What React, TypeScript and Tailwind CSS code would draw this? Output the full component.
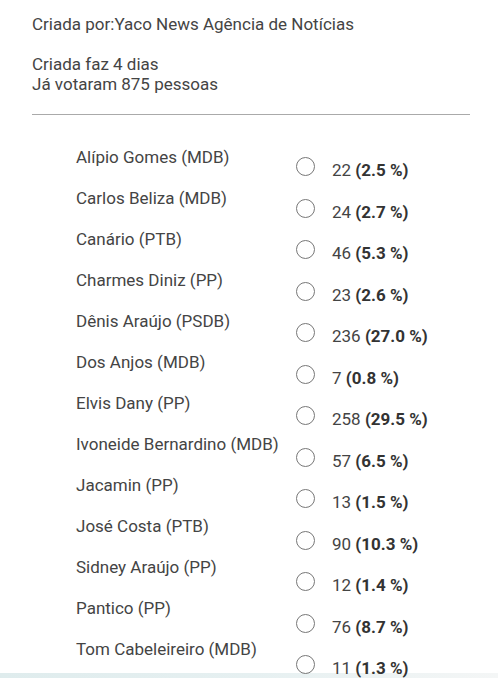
const rows: { name: string; votes: number; pct: string }[] = [
  { name: 'Alípio Gomes (MDB)', votes: 22, pct: '2.5' },
  { name: 'Carlos Beliza (MDB)', votes: 24, pct: '2.7' },
  { name: 'Canário (PTB)', votes: 46, pct: '5.3' },
  { name: 'Charmes Diniz (PP)', votes: 23, pct: '2.6' },
  { name: 'Dênis Araújo (PSDB)', votes: 236, pct: '27.0' },
  { name: 'Dos Anjos (MDB)', votes: 7, pct: '0.8' },
  { name: 'Elvis Dany (PP)', votes: 258, pct: '29.5' },
  { name: 'Ivoneide Bernardino (MDB)', votes: 57, pct: '6.5' },
  { name: 'Jacamin (PP)', votes: 13, pct: '1.5' },
  { name: 'José Costa (PTB)', votes: 90, pct: '10.3' },
  { name: 'Sidney Araújo (PP)', votes: 12, pct: '1.4' },
  { name: 'Pantico (PP)', votes: 76, pct: '8.7' },
  { name: 'Tom Cabeleireiro (MDB)', votes: 11, pct: '1.3' },
];

export default function App() {
  return (
    <div className="relative h-[678px] overflow-hidden bg-white font-['Roboto',sans-serif] text-[17px] leading-[20px] text-[#444]">
      <div className="absolute inset-x-0 bottom-0 h-[5px] bg-gradient-to-r from-[#dfeced] via-[#e6f0f1] to-[#f4f6f6]" />

      <div className="relative pl-8 pr-[28px] pt-[14px]">
        <p>Criada por:Yaco News Agência de Notícias</p>
        <p className="mt-5">Criada faz 4 dias</p>
        <p>Já votaram 875 pessoas</p>
        <div className="mt-5 border-t border-[#aaa]" />
      </div>

      {/* names and results sit in two columns; the results drift a little lower row by row */}
      <div className="relative mt-[32px] flex pl-[76px]">
        <ul className="w-[220px] shrink-0">
          {rows.map((r) => (
            <li key={r.name} className="h-[41px] whitespace-nowrap">
              {r.name}
            </li>
          ))}
        </ul>
        <ul className="pt-[10px]">
          {rows.map((r) => (
            <li key={r.name} className="flex h-[41.5px] items-start">
              <span className="h-[19px] w-[19px] shrink-0 rounded-full border-[1.5px] border-[#777]" />
              <span className="ml-[17px] mt-[3px] whitespace-nowrap">
                {r.votes} <b className="font-bold text-[#333]">({r.pct} %)</b>
              </span>
            </li>
          ))}
        </ul>
      </div>
    </div>
  );
}
